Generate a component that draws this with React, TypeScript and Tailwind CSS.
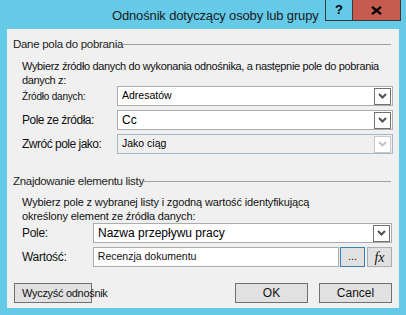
import React from "react"

const sans = { fontFamily: '"Liberation Sans", Arial, sans-serif' }

function Chevron({ disabled }: { disabled?: boolean }) {
  return (
    <div
      className={
        "w-[17px] h-[17px] border flex items-center justify-center bg-white " +
        (disabled ? "border-[#c8c8c8]" : "border-[#707070]")
      }
    >
      <svg width="9" height="6" viewBox="0 0 9 6">
        <polyline
          points="1,1 4.5,4.5 8,1"
          fill="none"
          stroke={disabled ? "#c4c4c4" : "#505050"}
          strokeWidth="2"
        />
      </svg>
    </div>
  )
}

function Select({
  value,
  big,
  disabled,
  className,
}: {
  value: string
  big?: boolean
  disabled?: boolean
  className?: string
}) {
  return (
    <div
      className={
        "h-[20px] border flex items-center justify-between pl-[4px] pr-[1px] " +
        (disabled ? "bg-[#f0f0f0] border-[#a9b6c9] " : "bg-white border-[#acacac] ") +
        (className ?? "")
      }
    >
      <span className={big ? "text-[12px] text-black" : "text-[10.5px] text-black"}>{value}</span>
      <Chevron disabled={disabled} />
    </div>
  )
}

function GroupHeader({ title }: { title: string }) {
  return (
    <div className="flex items-center h-[14px] pl-[6px] pr-[8px]">
      <span className="text-[11.5px] tracking-[-0.3px] text-[#1e1e1e] leading-none">{title}</span>
      <div className="flex-1 h-px bg-[#a0a0a0] -mt-[2px]" />
    </div>
  )
}

export default function App() {
  return (
    <div className="w-[406px] h-[315px] bg-[#65c9e8] flex flex-col" style={sans}>
      {/* title bar */}
      <div className="h-[29px] flex items-start">
        <div className="flex-1 min-w-0 pl-[112px] pt-[8px] text-[13px] text-[#1b1b1b] leading-[16px] whitespace-nowrap tracking-[-0.15px]">
          Odnośnik dotyczący osoby lub grupy
        </div>
        <div className="flex h-[21px] mr-[5px]">
          <div className="w-[28px] border border-t-0 border-[#3a3a3a] flex items-center justify-center text-[13px] font-bold text-black">
            ?
          </div>
          <div className="w-[48px] border border-t-0 border-l-0 border-[#3a3a3a] bg-[#c75b50] flex items-center justify-center">
            <svg width="11" height="9" viewBox="0 0 11 9">
              <path d="M1 0.8 L10 8.2 M10 0.8 L1 8.2" stroke="#000" strokeWidth="2.2" />
            </svg>
          </div>
        </div>
      </div>

      {/* body */}
      <div className="mx-[7px] h-[279px] bg-[#f0f0f0] flex flex-col pt-[9px] text-[#111]">
        <GroupHeader title="Dane pola do pobrania" />
        <div className="pl-[15px] pr-[8px] mt-[7px] text-[11px] leading-[14px] tracking-[-0.35px]">
          Wybierz źródło danych do wykonania odnośnika, a następnie pole do pobrania
          <br />
          danych z:
        </div>
        <div className="flex flex-col gap-[4px] mt-[-1px] pl-[15px] pr-[6px]">
          <div className="flex items-center">
            <span className="w-[95px] text-[10px] tracking-[-0.2px]">Źródło danych:</span>
            <Select value="Adresatów" className="flex-1" />
          </div>
          <div className="flex items-center">
            <span className="w-[95px] text-[12px] tracking-[-0.5px]">Pole ze źródła:</span>
            <Select value="Cc" big className="flex-1" />
          </div>
          <div className="flex items-center">
            <span className="w-[95px] text-[12px] tracking-[-0.5px]">Zwróć pole jako:</span>
            <Select value="Jako ciąg" disabled className="flex-1" />
          </div>
        </div>

        <div className="mt-[21px]">
          <GroupHeader title="Znajdowanie elementu listy" />
        </div>
        <div className="pl-[15px] pr-[8px] mt-[6px] text-[11px] leading-[14px] tracking-[-0.15px]">
          Wybierz pole z wybranej listy i zgodną wartość identyfikującą
          <br />
          określony element ze źródła danych:
        </div>
        <div className="flex flex-col gap-[4px] pl-[15px] pr-[7px]">
          <div className="flex items-center">
            <span className="w-[71px] text-[12px] tracking-[-0.3px]">Pole:</span>
            <Select value="Nazwa przepływu pracy" big className="flex-1" />
          </div>
          <div className="flex items-center h-[20px]">
            <span className="w-[71px] text-[12px] tracking-[-0.3px]">Wartość:</span>
            <div className="w-[247px] h-[20px] bg-white border border-[#acacac] flex items-center pl-[4px] text-[10.5px]">
              Recenzja dokumentu
            </div>
            <div className="ml-[1px] w-[25px] h-[20px] bg-[#e1e1e1] border border-[#3c7fb1] flex items-center justify-center text-[11px] pb-[2px]">
              ...
            </div>
            <div
              className="ml-[2px] w-[25px] h-[20px] bg-[#e1e1e1] border border-[#adadad] flex items-center justify-center text-[14px] italic"
              style={{ fontFamily: '"Liberation Serif", serif' }}
            >
              fx
            </div>
          </div>
        </div>

        <div className="flex items-center mt-[16px] pl-[7px] pr-[7px]">
          <div className="w-[78px] h-[20px] bg-[#e1e1e1] border border-[#707070] flex items-center pl-[7px] text-[11px] whitespace-nowrap overflow-visible tracking-[-0.3px]">
            Wyczyść odnośnik
          </div>
          <div className="flex-1" />
          <div className="w-[73px] h-[20px] bg-[#e1e1e1] border border-[#707070] flex items-center justify-center text-[12px]">
            OK
          </div>
          <div className="ml-[11px] w-[73px] h-[20px] bg-[#e1e1e1] border border-[#707070] flex items-center justify-center text-[12px]">
            Cancel
          </div>
        </div>
      </div>
    </div>
  )
}
